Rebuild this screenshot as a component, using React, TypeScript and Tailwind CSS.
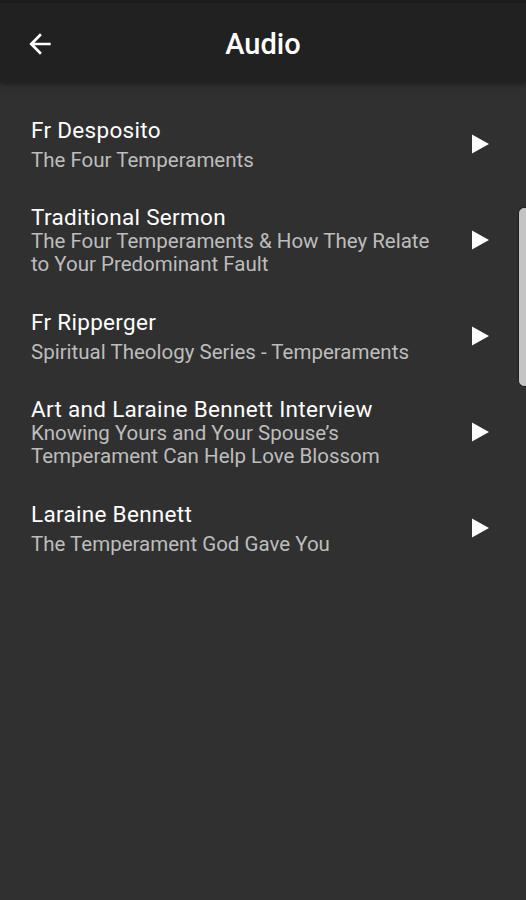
import React from "react";

type Item = { title: string; sub: string[] };

const items: Item[] = [
  { title: "Fr Desposito", sub: ["The Four Temperaments"] },
  {
    title: "Traditional Sermon",
    sub: ["The Four Temperaments & How They Relate", "to Your Predominant Fault"],
  },
  { title: "Fr Ripperger", sub: ["Spiritual Theology Series - Temperaments"] },
  {
    title: "Art and Laraine Bennett Interview",
    sub: ["Knowing Yours and Your Spouse\u2019s", "Temperament Can Help Love Blossom"],
  },
  { title: "Laraine Bennett", sub: ["The Temperament God Gave You"] },
];

function PlayIcon() {
  return (
    <svg width="20" height="20" viewBox="0 0 20 20" fill="#ffffff">
      <path d="M2 0.5 L19 10 L2 19.5 Z" />
    </svg>
  );
}

function BackIcon() {
  return (
    <svg width="32" height="32" viewBox="0 0 24 24" fill="#ffffff">
      <path d="M20 11H7.83l5.59-5.59L12 4l-8 8 8 8 1.41-1.41L7.83 13H20v-2z" />
    </svg>
  );
}

export default function App() {
  return (
    <div
      className="relative w-[526px] h-[900px] bg-[#303030] overflow-hidden"
      style={{ fontFamily: "Roboto, 'Noto Sans', sans-serif" }}
    >
      <div className="relative z-10 h-[82px] bg-[#212121] flex items-center shadow-[0_2px_6px_rgba(0,0,0,0.45)] border-t-[3px] border-[#1b1b1b]">
        <div className="w-[80px] flex items-center pl-[24px] pt-[3px]">
          <BackIcon />
        </div>
        <div className="flex-1 text-center text-white text-[29px] font-medium pr-[80px] pt-[4px]">
          Audio
        </div>
      </div>
      <div className="pt-[14px]">
        {items.map((it) => (
          <div key={it.title} className="h-[96px] flex items-center pl-[31px] pr-[36px]">
            <div className="flex-1">
              <div className="text-white text-[22.5px] leading-[26px] tracking-[0.3px]">{it.title}</div>
              <div
                className={
                  "text-[#bdbdbd] text-[20.5px] leading-[23px] " +
                  (it.sub.length === 1 ? "mt-[6px]" : "mt-0")
                }
              >
                {it.sub.map((s) => (
                  <div key={s}>{s}</div>
                ))}
              </div>
            </div>
            <PlayIcon />
          </div>
        ))}
      </div>
      <div className="absolute right-0 top-[207px] w-[8px] h-[180px] rounded-l-[6px] bg-[#c4c4c4] border border-r-0 border-[#1e1e1e]" />
    </div>
  );
}
